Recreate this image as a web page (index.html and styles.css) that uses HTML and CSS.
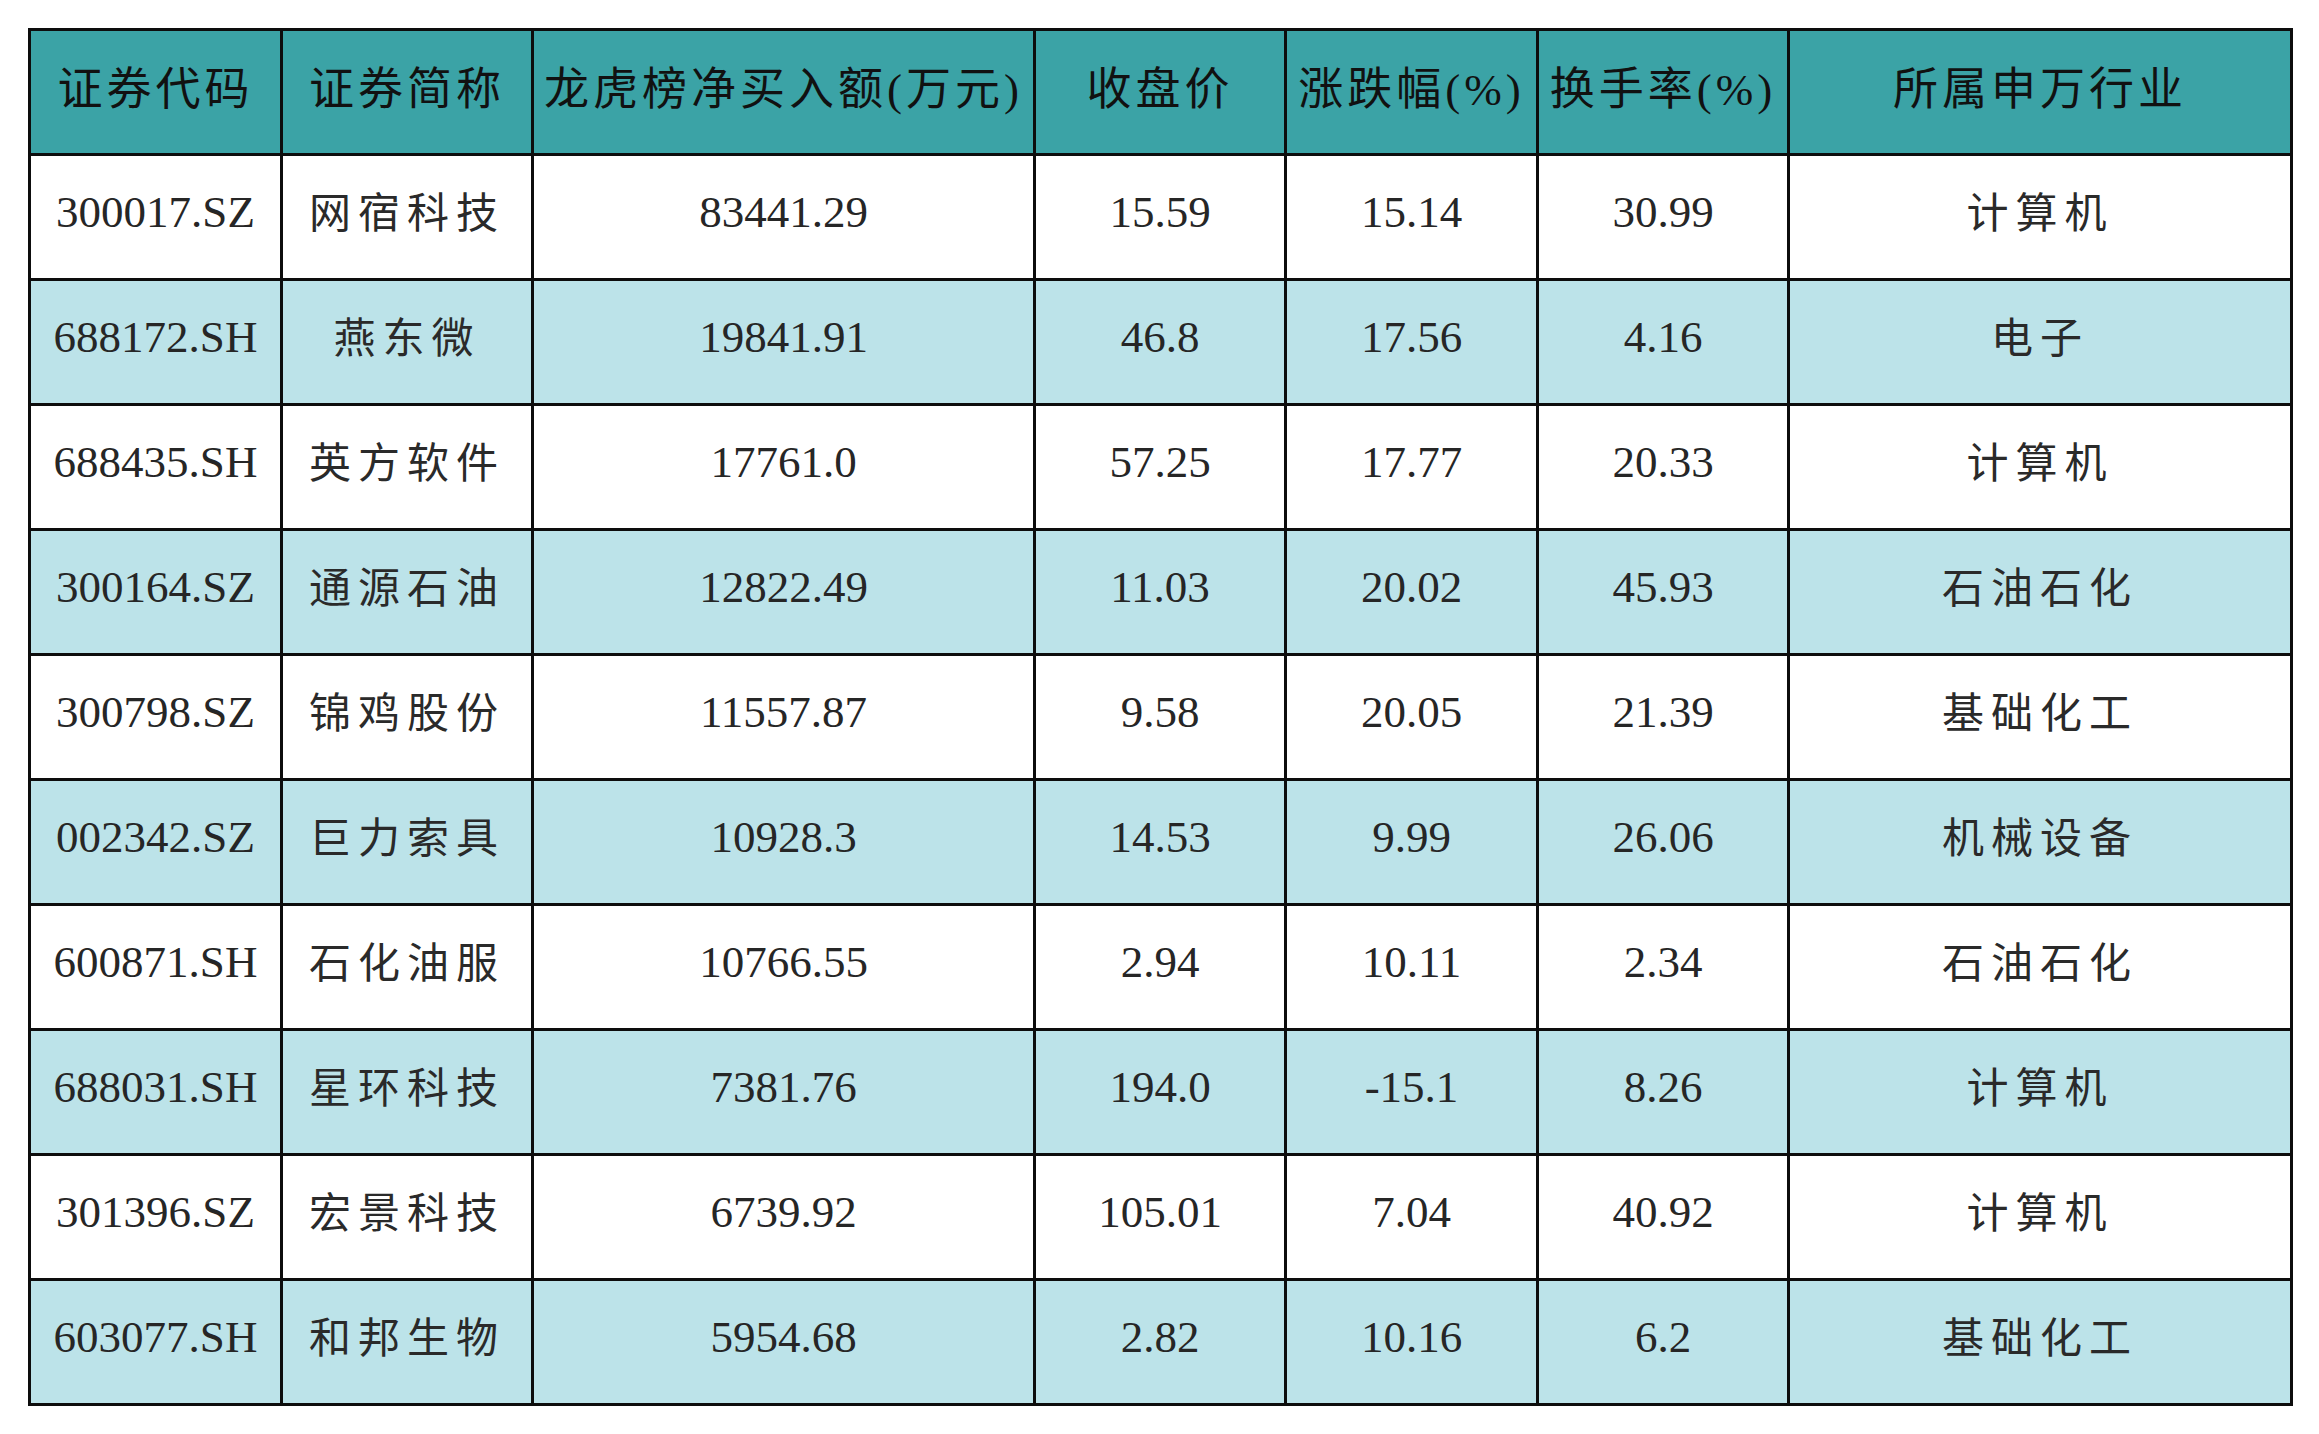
FILE: index.html
```html
<!DOCTYPE html>
<html lang="zh-CN">
<head>
<meta charset="utf-8">
<title>龙虎榜净买入额</title>
<link rel="stylesheet" href="styles.css">
</head>
<body>
<table class="grid">
  <thead>
    <tr class="head">
      <th class="c1">证券代码</th>
      <th class="c2">证券简称</th>
      <th class="c3">龙虎榜净买入额(万元)</th>
      <th class="c4">收盘价</th>
      <th class="c5">涨跌幅(%)</th>
      <th class="c6">换手率(%)</th>
      <th class="c7">所属申万行业</th>
    </tr>
  </thead>
  <tbody>
    <tr><td>300017.SZ</td><td class="zh">网宿科技</td><td>83441.29</td><td>15.59</td><td>15.14</td><td>30.99</td><td class="zh">计算机</td></tr>
    <tr class="alt"><td>688172.SH</td><td class="zh">燕东微</td><td>19841.91</td><td>46.8</td><td>17.56</td><td>4.16</td><td class="zh">电子</td></tr>
    <tr><td>688435.SH</td><td class="zh">英方软件</td><td>17761.0</td><td>57.25</td><td>17.77</td><td>20.33</td><td class="zh">计算机</td></tr>
    <tr class="alt"><td>300164.SZ</td><td class="zh">通源石油</td><td>12822.49</td><td>11.03</td><td>20.02</td><td>45.93</td><td class="zh">石油石化</td></tr>
    <tr><td>300798.SZ</td><td class="zh">锦鸡股份</td><td>11557.87</td><td>9.58</td><td>20.05</td><td>21.39</td><td class="zh">基础化工</td></tr>
    <tr class="alt"><td>002342.SZ</td><td class="zh">巨力索具</td><td>10928.3</td><td>14.53</td><td>9.99</td><td>26.06</td><td class="zh">机械设备</td></tr>
    <tr><td>600871.SH</td><td class="zh">石化油服</td><td>10766.55</td><td>2.94</td><td>10.11</td><td>2.34</td><td class="zh">石油石化</td></tr>
    <tr class="alt"><td>688031.SH</td><td class="zh">星环科技</td><td>7381.76</td><td>194.0</td><td>-15.1</td><td>8.26</td><td class="zh">计算机</td></tr>
    <tr><td>301396.SZ</td><td class="zh">宏景科技</td><td>6739.92</td><td>105.01</td><td>7.04</td><td>40.92</td><td class="zh">计算机</td></tr>
    <tr class="alt"><td>603077.SH</td><td class="zh">和邦生物</td><td>5954.68</td><td>2.82</td><td>10.16</td><td>6.2</td><td class="zh">基础化工</td></tr>
  </tbody>
</table>
</body>
</html>
```

FILE: styles.css
```css
html, body {
  margin: 0;
  padding: 0;
  background: #ffffff;
}

body {
  padding: 28px 0 0 28px;
  font-family: "Liberation Serif", "Noto Sans CJK SC", serif;
  color: #262626;
}

.grid {
  table-layout: fixed;
  border-collapse: separate;
  border-spacing: 0;
  width: 2265px;
  border-left: 3px solid #0d0d0d;
  border-top: 3px solid #0d0d0d;
}

.grid th,
.grid td {
  box-sizing: border-box;
  height: 125px;
  padding: 0 0 10px 0;
  border-right: 3px solid #0d0d0d;
  border-bottom: 3px solid #0d0d0d;
  text-align: center;
  vertical-align: middle;
  font-size: 45px;
  font-weight: 400;
  white-space: nowrap;
  background: #ffffff;
}

.grid th {
  background: #3ba3a6;
  color: #111111;
  letter-spacing: 4px;
  padding-bottom: 14px;
}

.grid tr.alt td {
  background: #bce3e9;
}

.grid td.zh {
  font-size: 42px;
  letter-spacing: 7px;
  color: #2a2a2a;
  padding-bottom: 16px;
}

.c1 { width: 252px; }
.c2 { width: 251px; }
.c3 { width: 502px; }
.c4 { width: 251px; }
.c5 { width: 252px; }
.c6 { width: 251px; }
.c7 { width: 503px; }
```
